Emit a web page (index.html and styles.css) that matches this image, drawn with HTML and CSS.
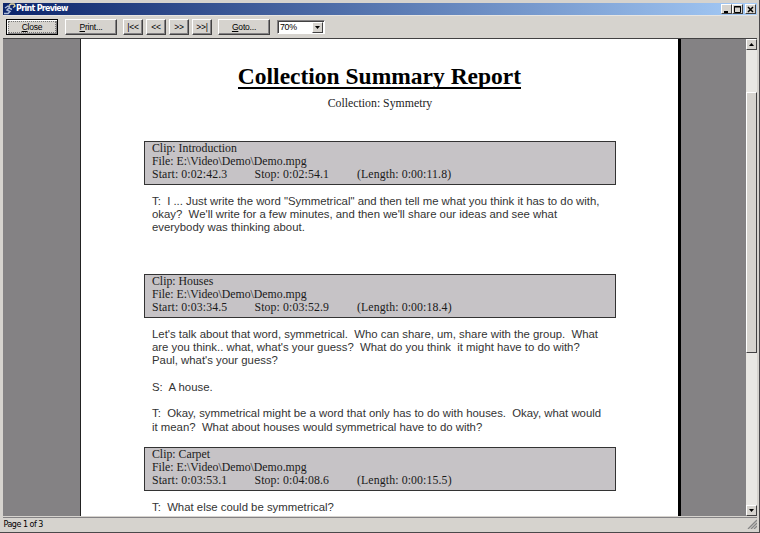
FILE: index.html
```html
<!DOCTYPE html>
<html lang="en">
<head>
<meta charset="utf-8">
<title>Print Preview</title>
<link rel="stylesheet" href="styles.css">
</head>
<body>
<div class="window">
  <header class="titlebar">
    <svg class="logo" width="12" height="12" viewBox="0 0 12 12"><path d="M1 5 4 3 6 4M0 10.5H4L6 8.5 3 7 5 5 8 6.5" fill="none" stroke="#a9b9d8" stroke-width="1.5"/><path d="M5 2.5 7 1H10L11 3 9 4.5" fill="none" stroke="#e1d7a0" stroke-width="1.4"/></svg>
    <h1 class="caption">Print Preview</h1>
    <div class="controls">
      <span class="ctl"><svg width="9" height="9"><path d="M2 7H6" stroke="#000" stroke-width="2"/></svg></span>
      <span class="ctl"><svg width="9" height="9"><path d="M1.5 1.5H7.5V7.5H1.5ZM1 2H8" fill="none" stroke="#000"/></svg></span>
      <span class="ctl close"><svg width="9" height="9"><path d="M2 2 7 7M7 2 2 7" stroke="#000" stroke-width="1.5"/></svg></span>
    </div>
  </header>
  <nav class="toolbar">
    <button class="btn default"><span><u>C</u>lose</span></button>
    <button class="btn print"><span><u>P</u>rint...</span></button>
    <div class="pager">
      <button class="btn">|&lt;&lt;</button><button class="btn">&lt;&lt;</button><button class="btn">&gt;&gt;</button><button class="btn">&gt;&gt;|</button>
    </div>
    <button class="btn goto"><span><u>G</u>oto...</span></button>
    <div class="combo"><span>70%</span><span class="drop"><svg width="5" height="3"><path d="M0 0H5L2.5 3Z"/></svg></span></div>
  </nav>
  <main class="view">
    <div class="canvas">
      <article class="page">
        <h2 class="title"><span>Collection Summary Report</span></h2>
        <p class="sub">Collection: Symmetry</p>
        <section class="clip first">
          <p>Clip: Introduction</p><p>File: E:\Video\Demo\Demo.mpg</p>
          <p class="times"><span>Start: 0:02:42.3</span><span>Stop: 0:02:54.1</span><span>(Length: 0:00:11.8)</span></p>
        </section>
        <div class="speech intro">T:  I ... Just write the word "Symmetrical" and then tell me what you think it has to do with,
okay?  We'll write for a few minutes, and then we'll share our ideas and see what
everybody was thinking about.</div>
        <section class="clip">
          <p>Clip: Houses</p><p>File: E:\Video\Demo\Demo.mpg</p>
          <p class="times"><span>Start: 0:03:34.5</span><span>Stop: 0:03:52.9</span><span>(Length: 0:00:18.4)</span></p>
        </section>
        <div class="speech houses">Let's talk about that word, symmetrical.  Who can share, um, share with the group.  What
are you think.. what, what's your guess?  What do you think  it might have to do with?
Paul, what's your guess?

S:  A house.

T:  Okay, symmetrical might be a word that only has to do with houses.  Okay, what would
it mean?  What about houses would symmetrical have to do with?</div>
        <section class="clip">
          <p>Clip: Carpet</p><p>File: E:\Video\Demo\Demo.mpg</p>
          <p class="times"><span>Start: 0:03:53.1</span><span>Stop: 0:04:08.6</span><span>(Length: 0:00:15.5)</span></p>
        </section>
        <div class="speech">T:  What else could be symmetrical?</div>
      </article>
    </div>
    <div class="scroll">
      <span class="arrow"><svg width="5" height="3"><path d="M0 3H5L2.5 0Z"/></svg></span>
      <span class="thumb"></span>
      <span class="arrow"><svg width="5" height="3"><path d="M0 0H5L2.5 3Z"/></svg></span>
    </div>
  </main>
  <footer class="status"><span>Page 1 of 3</span><svg width="10" height="10"><path d="M1 10 10 1M4 10 10 4M7 10 10 7" stroke="#858585" stroke-width="1.3"/></svg></footer>
</div>
</body>
</html>
```
FILE: styles.css
```css
* { box-sizing: border-box; }
body, p, h1, h2 { margin: 0; }
body { width: 760px; height: 533px; overflow: hidden; background: #d6d3ce; color: #000; }
.window {
  width: 760px; height: 533px; display: flex; flex-direction: column;
  padding: 3px 2px 2px 3px; border-right: 1px solid #4a484a; border-bottom: 1px solid #4a484a;
  font: 9px "Liberation Sans", sans-serif;
}
.titlebar {
  height: 12px; flex: none; display: flex; align-items: center; padding: 0 1px 0 1px;
  background: linear-gradient(90deg, #0b246b, #a5cbf7);
}
.logo { flex: none; }
.caption { color: #fff; font: bold 8px/12px "DejaVu Sans", sans-serif; letter-spacing: -.7px; white-space: nowrap; flex: 1; }
.controls { display: flex; }
.ctl {
  width: 11px; height: 10px; background: #d6d3ce; display: flex; align-items: center; justify-content: center;
  border: 1px solid; border-color: #fff #424142 #424142 #fff;
}
.ctl svg { flex: none; }
.close { margin-left: 2px; }
.toolbar { height: 23px; flex: none; display: flex; align-items: flex-start; padding: 3px 0 0 3px; border-top: 1px solid #e7e5e2; }
.btn {
  height: 16px; padding: 0; background: #d6d3ce; color: #000; font: 8.5px/12px "Liberation Sans", sans-serif;
  border: 1px solid; border-color: #fff #424142 #424142 #fff; box-shadow: inset -1px -1px #848284; letter-spacing: -.2px;
}
.default { width: 52px; border-color: #000; box-shadow: inset 1px 1px #fff, inset -1px -1px #848284; padding: 1px; }
.default span { display: block; height: 12px; line-height: 11px; border: 1px dotted #777; }
.print { width: 52px; margin-left: 7px; }
.pager { display: flex; gap: 3px; margin-left: 6px; }
.pager .btn { width: 20px; }
.goto { width: 52px; margin-left: 6px; }
.combo {
  width: 48px; height: 14px; margin: 1px 0 0 7px; background: #fff; display: flex; justify-content: space-between;
  border: 1px solid; border-color: #848284 #fff #fff #848284; box-shadow: inset 1px 1px #424142;
  font-size: 8.8px; line-height: 13px; padding: 1px 1px 0 2px; letter-spacing: -.3px;
}
.combo > span:first-child { margin-top: -1px; }
.drop { width: 11px; height: 11px; background: #d6d3ce; border: 1px solid; border-color: #fff #424142 #424142 #fff; display: flex; align-items: center; justify-content: center; }
.view { height: 478px; flex: none; display: flex; border-top: 1px solid #424142; overflow: hidden; }
.canvas { width: 743px; background: #848284; padding-left: 77px; overflow: hidden; }
.page { width: 601px; height: 478px; background: #fff; border-left: 1px solid #222; border-right: 3px solid #000; padding: 23px 0 0 63px; white-space: nowrap; }
.title { width: 472px; height: 28px; text-align: center; font: bold 23.5px/28px "Liberation Serif", serif; }
.title span { border-bottom: 2px solid #000; display: inline-block; line-height: 24px; height: 25px; margin-right: 1px; }
.sub { width: 472px; text-align: center; font: 11.8px/14px "Liberation Serif", serif; margin-top: 6px; color: #222; }
.clip {
  width: 472px; height: 44px; background: #c6c3c6; border: 1px solid #333; padding: 0 0 0 7px;
  font: 11.8px/13.2px "Liberation Serif", serif; color: #1a1a1a;
}
.first { margin-top: 31px; }
.times { display: flex; letter-spacing: .12px; }
.times span { width: 102.5px; }
.speech { white-space: pre; font: 11.37px/13.3px "Liberation Sans", sans-serif; padding: 9.7px 0 0 8px; color: #333; }
.intro { height: 89px; }
.houses { height: 129px; }
.scroll { width: 11px; display: flex; flex-direction: column; background: #e9e7e3; }
.arrow, .thumb { background: #d6d3ce; border: 1px solid; border-color: #fff #424142 #424142 #fff; }
.arrow { height: 11px; flex: none; display: flex; align-items: center; justify-content: center; }
.thumb { height: 261px; margin: 42px 0 auto; }
.status {
  height: 13px; margin-top: 1px; flex: none; display: flex; justify-content: space-between; align-items: center;
  border-top: 1px solid #848284; font: 8px/12px "DejaVu Sans", sans-serif; letter-spacing: -.5px;
}
.status span { padding: 1px 0 0 .5px; }
```
